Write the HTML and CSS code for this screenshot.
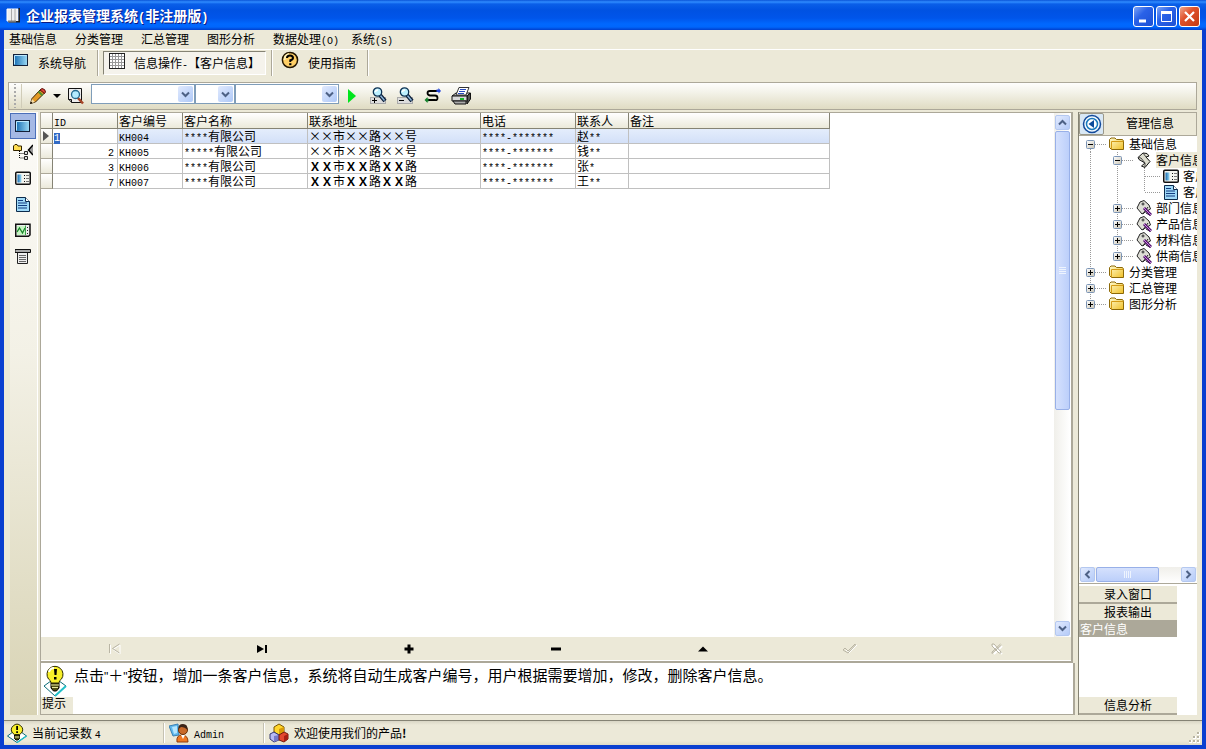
FILE: index.html
```html
<!DOCTYPE html>
<html lang="zh-CN">
<head>
<meta charset="utf-8">
<title>企业报表管理系统</title>
<link rel="stylesheet" href="styles.css">
</head>
<body>
<svg class="defs" aria-hidden="true">
  <defs>
    <linearGradient id="screenFill" x1="0" y1="0" x2="1" y2="0"><stop offset="0" stop-color="#1269b0"/><stop offset="1" stop-color="#9fdcf5"/></linearGradient>
    <linearGradient id="folderFill" x1="0" y1="0" x2="1" y2="1"><stop offset="0" stop-color="#fffbd0"/><stop offset="1" stop-color="#f0bf25"/></linearGradient>
    <linearGradient id="boxFill" x1="0" y1="0" x2="1" y2="1"><stop offset="0" stop-color="#fff"/><stop offset="1" stop-color="#c9c4b4"/></linearGradient>
    <symbol id="screen" viewBox="0 0 16 16"><rect x=".5" y="2.500" width="14" height="11" fill="url(#screenFill)" stroke="#14213a"/><path d="M1.500 12.500V3.500H13.500" fill="none" stroke="#bfeaff"/></symbol>
    <symbol id="card" viewBox="0 0 16 16"><rect x=".75" y="2.250" width="14.500" height="12" rx="1" fill="#f4f4ee" stroke="#111" stroke-width="1.500"/><rect x="2.500" y="4.500" width="4" height="8" fill="url(#screenFill)"/><path d="M9 5.500h1M9 8.500h1M9 11.500h1" stroke="#111"/><path d="M11 5.500h3M11 8.500h3M11 11.500h3" stroke="#777"/></symbol>
    <symbol id="doc" viewBox="0 0 16 16"><path d="M1.500 1.500H10.500L14.500 5.500V15.500H1.500Z" fill="#9fd9f8" stroke="#0c2b4c"/><path d="M10.500 1.500V5.500H14.500" fill="#fff" stroke="#0c2b4c"/><path d="M3 4.500h5M3 7h9M3 9.500h9M3 12h9" stroke="#123b80" stroke-width="1.200"/></symbol>
    <symbol id="folder" viewBox="0 0 16 16"><path d="M.5 11.500V3.500L2 2H6L7.500 3.500H13.500L14.500 5V13.500H2.500Z" fill="url(#folderFill)" stroke="#8c6908"/><path d="M2.500 13.500V5.500H14.500" fill="none" stroke="#d49b15"/></symbol>
    <symbol id="scroll" viewBox="0 0 16 16"><path d="M7 1L11 1.500L13 4L10 5L14 9.500L9 15.500L5.500 14L9 11L3 7.500L2 5.500Z" fill="#ddddcf" stroke="#111"/><path d="M7 1L10 5M2 5.500L5 6L9 11L9 15" fill="none" stroke="#444"/></symbol>
    <symbol id="tag" viewBox="0 0 16 16"><path d="M1 8L4 2L8 .5L13 5L14.500 9L6 14Z" fill="#deded6" stroke="#222"/><circle cx="7" cy="4" r="1" fill="#fff" stroke="#222"/><path d="M7 14L12 7M10 13L14.500 15.500" stroke="#222"/><path d="M8 8L15 15" stroke="#54156e" stroke-width="3"/><path d="M8 8L15 15" stroke="#ca85df"/></symbol>
    <symbol id="plus" viewBox="0 0 9 9"><rect x=".5" y=".5" width="8" height="8" rx="1" fill="url(#boxFill)" stroke="#7b94b5"/><path d="M2 4.500h5M4.500 2v5" stroke="#000"/></symbol>
    <symbol id="minus" viewBox="0 0 9 9"><rect x=".5" y=".5" width="8" height="8" rx="1" fill="url(#boxFill)" stroke="#7b94b5"/><path d="M2 4.500h5" stroke="#000"/></symbol>
    <symbol id="line" viewBox="0 0 27 16"><path d="M11.500 0V16" class="dots"/></symbol>
    <symbol id="tee" viewBox="0 0 27 16"><path d="M11.500 0V16M12 8.500H27" class="dots"/></symbol>
    <symbol id="elbow" viewBox="0 0 27 16"><path d="M11.500 0V8M12 8.500H27" class="dots"/></symbol>
    <symbol id="teeplus" viewBox="0 0 27 16"><use href="#tee" width="27" height="16"/><use href="#plus" x="7" y="4" width="9" height="9"/></symbol>
    <symbol id="teeminus" viewBox="0 0 27 16"><use href="#tee" width="27" height="16"/><use href="#minus" x="7" y="4" width="9" height="9"/></symbol>
    <symbol id="firstminus" viewBox="0 0 27 16"><path d="M11.500 9V16M12 8.500H27" class="dots"/><use href="#minus" x="7" y="4" width="9" height="9"/></symbol>
    <symbol id="endplus" viewBox="0 0 27 16"><use href="#elbow" width="27" height="16"/><use href="#plus" x="7" y="4" width="9" height="9"/></symbol>
    <symbol id="down" viewBox="0 0 9 7"><path d="M1 1.500L4.500 5L8 1.500" fill="none" stroke="#4d6185" stroke-width="2"/></symbol>
    <symbol id="lens" viewBox="0 0 17 17"><path d="M10 8L15 14" stroke="#071a35" stroke-width="4"/><path d="M10 8L14.500 13.500" stroke="#8bb4d8" stroke-width="1.500"/><circle cx="7.500" cy="5" r="4.200" fill="#bdf0ff" stroke="#0d3153" stroke-width="1.300"/><path d="M5.500 5Q5.500 3 8 3" fill="none" stroke="#fff" stroke-width="1.500"/></symbol>
    <symbol id="bulb" viewBox="0 0 24 32"><path d="M1 21L12 13L23 21L12 31Z" fill="#fff" stroke="#0b6b78"/><path d="M12 31L23 21" stroke="#21c0c9" stroke-width="2"/><path d="M8 18H16V23L13.500 26H10.500L8 23Z" fill="#504f12" stroke="#000"/><path d="M8 20H16M9 22.500H15" stroke="#e7e7a0"/><path d="M8 18Q8 15.500 5.500 14A8 8 0 1 1 18.500 14Q16 15.500 16 18Z" fill="#f8f02a" stroke="#2c2a00"/><path d="M6 7Q7 3 11 3" fill="none" stroke="#fff" stroke-width="2"/><path d="M11 4h3l-.5 6h-2zM11 12h2.500v2.500H11z" fill="#000"/></symbol>
    <symbol id="smallbulb" viewBox="0 0 20 20"><path d="M.5 13L10 6L19.500 13L10 19.500Z" fill="#fff" stroke="#0b6b78"/><path d="M10 19.500L19.500 13" stroke="#21c0c9" stroke-width="1.500"/><path d="M7.500 12H12.500V15.500L11 17H9L7.500 15.500Z" fill="#504f12" stroke="#000"/><path d="M7.500 14H12.500" stroke="#e7e7a0"/><path d="M7.500 11.500L5.500 10A5.500 5.500 0 1 1 14.500 10L12.500 11.500Z" fill="#f8f02a" stroke="#2c2a00"/><path d="M9.200 3h1.800v4H9.200zM9.200 8.200h1.800v1.800H9.200z" fill="#000"/></symbol>
  </defs>
</svg>
<div class="window">
  <header class="titlebar">
    <svg class="i16" viewBox="0 0 16 16"><path d="M1 1H12V13H1Z" fill="#eee" stroke="#fff"/><path d="M5.500 1V13M9 1V13" stroke="#aaa"/><path d="M12.500 0H14V14.500H3V13H12.500Z" fill="#222"/><path d="M2 13.500H10" stroke="#777" stroke-width="2"/></svg>
    <h1>企业报表管理系统<span>(</span>非注册版<span>)</span></h1>
    <div class="winbuttons">
      <button aria-label="最小化"><svg viewBox="0 0 19 19"><path d="M5 14h7" stroke="#fff" stroke-width="3"/></svg></button>
      <button aria-label="最大化"><svg viewBox="0 0 19 19"><path d="M4.500 5V14.500H14.500V5" fill="none" stroke="#fff"/><path d="M4 5.500H15" stroke="#fff" stroke-width="3"/></svg></button>
      <button class="close" aria-label="关闭"><svg viewBox="0 0 19 19"><path d="M5 5L14 14M14 5L5 14" stroke="#fff" stroke-width="2.200"/></svg></button>
    </div>
  </header>
  <nav class="menu">
    <button>基础信息</button><button>分类管理</button><button>汇总管理</button><button>图形分析</button><button class="tight">数据处理<span class="m">(O)</span></button><button>系统<span class="m">(S)</span></button>
  </nav>
  <div class="tabs">
    <button class="tab"><svg class="i16"><use href="#screen"/></svg>系统导航</button>
    <i class="sep"></i>
    <button class="tab active"><svg class="i16" viewBox="0 0 16 16"><rect x=".5" y=".5" width="15" height="15" fill="#fff" stroke="#222"/><path d="M3.500 1V15M6.500 1V15M9.500 1V15M12.500 1V15M1 3.500H15M1 6.500H15M1 9.500H15M1 12.500H15" stroke="#999"/></svg><span>信息操作<span class="m">-</span>【客户信息】</span></button>
    <i class="sep"></i>
    <button class="tab"><svg class="i18" viewBox="0 0 18 18"><circle cx="9" cy="9" r="7.600" fill="#ffcf65" stroke="#221500" stroke-width="1.500"/><path d="M3.500 9Q3.500 4 8 3" stroke="#fff0b5" stroke-width="2" fill="none"/><path d="M6 7Q6 4.500 9 4.500T12 7Q12 8.500 9.300 9.300V11" fill="none" stroke="#000" stroke-width="2"/><path d="M8.200 12.200h2.200v2H8.200z"/></svg>使用指南</button>
    <i class="sep"></i>
  </div>
  <div class="toolbar">
    <i class="grip"></i>
    <button class="tool" aria-label="编辑"><svg class="i18" viewBox="0 0 18 18"><path d="M1.500 16.500L3 11.500L11.500 2.500L15.500 6L6.500 15Z" fill="#e39a25" stroke="#3a2104"/><path d="M11 3L13 1.500Q16.500 2 16.500 5L15.500 6.500Z" fill="#df4236" stroke="#5b130d"/><path d="M9.500 4.500L13.500 8.500" stroke="#4f8f2d" stroke-width="2"/><path d="M3 12L6 15L1.500 16.500Z" fill="#f7dda5"/><path d="M1 17L3.500 16L2 14.500Z"/></svg></button>
    <button class="arrow" aria-label="编辑选项"><svg viewBox="0 0 8 4"><path d="M0 0H8L4 4Z"/></svg></button>
    <button class="tool" aria-label="预览"><svg class="i18" viewBox="0 0 18 18"><path d="M1.500 1.500H14.500V15.500H4.500L1.500 12.500Z" fill="#eee" stroke="#111"/><path d="M1.500 12.500H4.500V15.500" fill="#999" stroke="#111"/><path d="M10.500 10.500L16 16.500" stroke="#a64325" stroke-width="2.500"/><circle cx="8.500" cy="7.500" r="4" fill="#b4ebff" stroke="#24698e" stroke-width="1.300"/></svg></button>
    <div class="combos">
      <label class="combo"><select aria-label="字段"><option></option></select><span><svg><use href="#down"/></svg></span></label>
      <label class="combo narrow"><select aria-label="条件"><option></option></select><span><svg><use href="#down"/></svg></span></label>
      <label class="combo"><select aria-label="值"><option></option></select><span><svg><use href="#down"/></svg></span></label>
    </div>
    <div class="actions">
      <button aria-label="执行"><svg class="i18" viewBox="0 0 18 18"><path d="M5 2V16L13 9Z" fill="#00e51c"/></svg></button>
      <button aria-label="放大"><svg class="i18" viewBox="0 0 18 18"><rect x=".5" y="10.500" width="15" height="6" fill="#ddd" stroke="#aaa"/><use href="#lens" width="17" height="17"/><path d="M2 13.500h5M4.500 11v5" stroke="#000"/></svg></button>
      <button aria-label="缩小"><svg class="i18" viewBox="0 0 18 18"><rect x=".5" y="10.500" width="15" height="6" fill="#ddd" stroke="#aaa"/><use href="#lens" width="17" height="17"/><path d="M2 13.500h5" stroke="#000"/></svg></button>
      <button aria-label="转换"><svg class="i18" viewBox="0 0 18 18"><path d="M14 4H6Q3.500 4 3.500 6T6 8.500H11Q13.500 8.500 13.500 11T11 13H3" fill="none" stroke="#000" stroke-width="1.800"/><path d="M12.500 2.500h2V1L17 4L14.500 6.500V5h-2z" fill="#2445d8"/><path d="M4.500 11.500h-1V10L.5 13L3.500 16v-1.500h1z" fill="#15802b"/></svg></button>
      <button aria-label="打印"><svg class="i20" viewBox="0 0 20 20"><path d="M1 10L5 7H19L16 10Z" fill="#ddd" stroke="#111"/><path d="M16 10L19.500 7V13L16 18Z" fill="#555" stroke="#111"/><path d="M1 10H16V15H1Z" fill="#d8d8d8" stroke="#111"/><path d="M2 15H15V18H4Z" fill="#aaa" stroke="#111"/><path d="M5 9L8 1.500H18L15 9Z" fill="#fff" stroke="#333"/><path d="M9 3.500h6M8 5.500h6M7 7.500h6" stroke="#2649bd"/><path d="M9 13h4" stroke="#18b42b" stroke-width="2"/></svg></button>
    </div>
  </div>
  <main class="main">
    <aside class="rail">
      <button class="on" aria-label="系统导航"><svg class="i16"><use href="#screen"/></svg></button>
      <button aria-label="结构"><svg class="tall" viewBox="0 0 20 16"><path d="M.5 6.500V2L2 .5H4L5 2H8.500V6.500Z" fill="#ffdd53" stroke="#332500"/><path d="M6.500 7V14H11M6.500 9.500H11" fill="none" stroke="#000" stroke-dasharray="1 1"/><path d="M11.500 7.500H14.500V10.500H11.500ZM11.500 12.500H14.500V15.500H11.500Z" fill="#ddd" stroke="#222"/><path d="M20 1L15.500 6L20 11" fill="#999" stroke="#000" stroke-width="1.500"/></svg></button>
      <button aria-label="卡片"><svg class="i16"><use href="#card"/></svg></button>
      <button aria-label="文档"><svg class="i16"><use href="#doc"/></svg></button>
      <button aria-label="图表"><svg class="i16" viewBox="0 0 16 16"><path d="M.75 2.250H15V13L13.500 14.250H.75Z" fill="#eee" stroke="#111" stroke-width="1.500"/><path d="M2 4H10V13H2Z" fill="#c6f5c3"/><path d="M2 10L4.500 6L7.500 11L10 6" fill="none" stroke="#178529" stroke-width="1.300"/><path d="M10.500 3.500V13" stroke="#3ca34c"/><path d="M12 5.500h1M12 8.500h1M12 11.500h1" stroke="#222"/></svg></button>
      <button aria-label="报表"><svg class="i16" viewBox="0 0 16 16"><path d="M2.500 4H12.500V15.500H2.500Z" fill="#eee" stroke="#222"/><path d="M0 1.500H15.500V4.500H0Z" fill="#aaa" stroke="#111"/><path d="M4 7.500h7M4 9.500h7M4 11.500h7M4 13.500h7" stroke="#666"/></svg></button>
    </aside>
    <section class="center">
      <div class="gridpanel">
        <div class="gridarea">
          <div class="tablewrap">
            <table>
              <colgroup><col class="c0"><col class="c1"><col class="c2"><col class="c3"><col class="c4"><col class="c5"><col class="c6"><col class="c7"></colgroup>
              <thead><tr><th></th><th><span class="m">ID</span></th><th>客户编号</th><th>客户名称</th><th>联系地址</th><th>电话</th><th>联系人</th><th>备注</th></tr></thead>
              <tbody>
                <tr class="sel"><th><svg viewBox="0 0 6 10"><path d="M0 0L6 5L0 10Z" fill="#555"/></svg></th><td class="edit"><span class="m">1</span></td><td><span class="m">KH004</span></td><td><span class="m">****</span>有限公司</td><td>××市××路××号</td><td><span class="m">****-*******</span></td><td>赵<span class="m">**</span></td><td></td></tr>
                <tr><th></th><td class="num"><span class="m">2</span></td><td><span class="m">KH005</span></td><td><span class="m">*****</span>有限公司</td><td>××市××路××号</td><td><span class="m">****-*******</span></td><td>钱<span class="m">**</span></td><td></td></tr>
                <tr><th></th><td class="num"><span class="m">3</span></td><td><span class="m">KH006</span></td><td><span class="m">****</span>有限公司</td><td><b>ＸＸ</b>市<b>ＸＸ</b>路<b>ＸＸ</b>路</td><td><span class="m">****-*******</span></td><td>张<span class="m">*</span></td><td></td></tr>
                <tr><th></th><td class="num"><span class="m">7</span></td><td><span class="m">KH007</span></td><td><span class="m">****</span>有限公司</td><td><b>ＸＸ</b>市<b>ＸＸ</b>路<b>ＸＸ</b>路</td><td><span class="m">****-*******</span></td><td>王<span class="m">**</span></td><td></td></tr>
              </tbody>
            </table>
          </div>
          <div class="vscroll">
            <button aria-label="向上"><svg class="flip"><use href="#down"/></svg></button>
            <div class="vtrack"><div class="vthumb"><svg viewBox="0 0 8 8"><path d="M0 .5h7M0 2.500h7M0 4.500h7M0 6.500h7" stroke="#eef4fe"/></svg></div></div>
            <button aria-label="向下"><svg><use href="#down"/></svg></button>
          </div>
        </div>
        <div class="navigator">
          <button disabled aria-label="首条"><svg viewBox="0 0 12 12"><path d="M1.500 2V11M11 2L4 6.500L11 11Z" fill="none" stroke="#fff"/><path d="M.5 1V10M10.500 1L3.500 5.500L10.500 10" fill="none" stroke="#b9b5a4"/></svg></button>
          <button aria-label="末条"><svg viewBox="0 0 12 12"><path d="M1 2L8 6L1 10ZM9 2H11V10H9Z"/></svg></button>
          <button aria-label="增加"><svg viewBox="0 0 12 12"><path d="M4.500 1.500h3v3h3v3h-3v3h-3v-3h-3v-3h3z"/></svg></button>
          <button aria-label="删除"><svg viewBox="0 0 12 12"><path d="M1 4.500h10v3H1z"/></svg></button>
          <button aria-label="编辑"><svg viewBox="0 0 12 12"><path d="M6 3.500L11 8.500H1Z"/></svg></button>
          <button disabled aria-label="保存"><svg viewBox="0 0 14 12"><path d="M1 8L3 6L5 9L13 1" transform="translate(1 1)" fill="none" stroke="#fff"/><path d="M0 7L2 5L5 8L12 1L12.500 2L5 10Z" fill="none" stroke="#b9b5a4"/></svg></button>
          <button disabled aria-label="取消"><svg viewBox="0 0 12 12"><path d="M2 2L11 11M11 3L3 11" stroke="#fff" stroke-width="2"/><path d="M1 1H3L10 9V10L8 10L1 3ZM9.500 1L1 9V10.500L10.500 2" fill="none" stroke="#b9b5a4"/></svg></button>
        </div>
      </div>
      <div class="tip">
        <div class="tiplabel"><svg><use href="#bulb"/></svg><span>提示</span></div>
        <p>点击<span>"</span>＋<span>"</span>按钮，增加一条客户信息，系统将自动生成客户编号，用户根据需要增加，修改，删除客户信息。</p>
      </div>
    </section>
    <aside class="side">
      <div class="sidehead"><button aria-label="返回"><svg viewBox="0 0 20 20"><circle cx="10" cy="10" r="8.500" fill="#f4fbff" stroke="#12499a" stroke-width="1.500"/><circle cx="10" cy="10" r="5.500" fill="#fff" stroke="#1979bd" stroke-width="1.500"/><path d="M12 6V14L6.500 10Z" fill="#0d4b9b"/></svg></button><h2>管理信息</h2></div>
      <ul class="tree">
        <li><svg class="g"><use href="#firstminus"/></svg><svg class="i16"><use href="#folder"/></svg><span>基础信息</span></li>
        <li><svg class="g"><use href="#line"/></svg><svg class="g"><use href="#teeminus"/></svg><svg class="i16"><use href="#scroll"/></svg><span class="cur">客户信息</span></li>
        <li><svg class="g"><use href="#line"/></svg><svg class="g"><use href="#line"/></svg><svg class="g"><use href="#tee"/></svg><svg class="i16"><use href="#card"/></svg><span>客户信息</span></li>
        <li><svg class="g"><use href="#line"/></svg><svg class="g"><use href="#line"/></svg><svg class="g"><use href="#elbow"/></svg><svg class="i16"><use href="#doc"/></svg><span>客户信息</span></li>
        <li><svg class="g"><use href="#line"/></svg><svg class="g"><use href="#teeplus"/></svg><svg class="i16"><use href="#tag"/></svg><span>部门信息</span></li>
        <li><svg class="g"><use href="#line"/></svg><svg class="g"><use href="#teeplus"/></svg><svg class="i16"><use href="#tag"/></svg><span>产品信息</span></li>
        <li><svg class="g"><use href="#line"/></svg><svg class="g"><use href="#teeplus"/></svg><svg class="i16"><use href="#tag"/></svg><span>材料信息</span></li>
        <li><svg class="g"><use href="#line"/></svg><svg class="g"><use href="#endplus"/></svg><svg class="i16"><use href="#tag"/></svg><span>供商信息</span></li>
        <li><svg class="g"><use href="#teeplus"/></svg><svg class="i16"><use href="#folder"/></svg><span>分类管理</span></li>
        <li><svg class="g"><use href="#teeplus"/></svg><svg class="i16"><use href="#folder"/></svg><span>汇总管理</span></li>
        <li><svg class="g"><use href="#endplus"/></svg><svg class="i16"><use href="#folder"/></svg><span>图形分析</span></li>
      </ul>
      <div class="hscroll">
        <button aria-label="向左"><svg class="left"><use href="#down"/></svg></button>
        <div class="htrack"><div class="hthumb"><svg viewBox="0 0 8 8"><path d="M.5 0v7M2.500 0v7M4.500 0v7M6.500 0v7" stroke="#eef4fe"/></svg></div></div>
        <button aria-label="向右"><svg class="right"><use href="#down"/></svg></button>
      </div>
      <div class="outlook">
        <button>录入窗口</button>
        <button>报表输出</button>
        <div class="chosen">客户信息</div>
        <div class="blank"></div>
        <button>信息分析</button>
      </div>
    </aside>
  </main>
  <footer class="status">
    <div class="cell"><svg class="i20"><use href="#smallbulb"/></svg><span>当前记录数 <span class="m">4</span></span></div>
    <div class="cell user"><svg class="i20" viewBox="0 0 20 20"><path d="M0 3L9 1L10 12L4 13Z" fill="#5fb8ed" stroke="#3980b4"/><path d="M3 4L8 3V10L5 11Z" fill="#b5e6ff"/><path d="M8 19Q7 12 13 12T19 19Z" fill="#ef7822" stroke="#8d3b0c"/><path d="M12 12L14 16L16 12Z" fill="#fff"/><circle cx="14" cy="7" r="4.500" fill="#c86a2a" stroke="#693008"/><path d="M9.500 6Q9 1 14 1T18.500 7Q16 4 12 4Z" fill="#3b2417"/></svg><span><span class="m">Admin</span></span></div>
    <div class="cell last"><svg class="i20" viewBox="0 0 20 20"><path d="M5 4L10 1L15 4V9L10 12L5 9Z" fill="#ffd52a" stroke="#7a5700"/><path d="M10 6V12L15 9V4Z" fill="#d79a07"/><path d="M1 11L5 9L10 12V17L5 19L1 16Z" fill="#b8baf4" stroke="#34366f"/><path d="M5 13V19L10 17V12Z" fill="#7679c8"/><path d="M10 12L15 9L19 11V16L15 19L10 17Z" fill="#e34730" stroke="#72180d"/><path d="M15 13V19L19 16V11Z" fill="#a71e15"/></svg><span>欢迎使用我们的产品<b>!</b></span></div>
    <svg class="resize" viewBox="0 0 12 12"><path d="M8 0h3v3H8zM4 4h3v3H4zM8 4h3v3H8zM0 8h3v3H0zM4 8h3v3H4zM8 8h3v3H8z" fill="#fff"/><path d="M8 0h2v2H8zM4 4h2v2H4zM8 4h2v2H8zM0 8h2v2H0zM4 8h2v2H4zM8 8h2v2H8z" fill="#b8b4a2"/></svg>
  </footer>
</div>
</body>
</html>
```

FILE: styles.css
```css
* { box-sizing: border-box; }
body {
  margin: 0;
  font-family: "Noto Sans CJK SC", "Liberation Sans", sans-serif;
  font-size: 12px;
  line-height: 14px;
  color: #000;
  background: #0b45ae;
}
svg { display: block; flex: none; }
button { font: inherit; color: inherit; padding: 0; border: 0; background: none; display: flex; align-items: center; justify-content: center; white-space: nowrap; }
.defs { position: absolute; width: 0; height: 0; }
.dots { stroke: #999; stroke-dasharray: 1 1; fill: none; }
.m { font-family: "Liberation Mono", monospace; font-size: 10px; line-height: 0; }
.i16 { width: 16px; height: 16px; }
.i18 { width: 18px; height: 18px; }
.i20 { width: 20px; height: 20px; }

.window { height: 100vh; display: flex; flex-direction: column; background: #0a3fd0; }
.titlebar {
  flex: none;
  height: 30px;
  display: flex;
  align-items: center;
  gap: 4px;
  padding: 2px 6px 0;
  color: #fff;
  background: linear-gradient(#0a55d8 0, #2f8cff 2px, #0a5fe8 4px, #0052e2 10px, #0055ea 18px, #0068ff 24px, #0066fc 27px, #003fcd 30px);
}
.titlebar h1 { flex: 1; margin: 0; font-size: 14px; line-height: 20px; font-weight: bold; text-shadow: 1px 1px #0a1883; }
.titlebar h1 span { font-family: "Liberation Mono", monospace; font-size: 12px; }
.winbuttons { display: flex; gap: 2px; }
.winbuttons button { width: 21px; height: 21px; border: 1px solid #fff; border-radius: 3px; background: linear-gradient(135deg, #7da4f5, #2a62e8 40%, #1c50d4); }
.winbuttons .close { background: linear-gradient(135deg, #f0a68c, #e0522c 40%, #c33a12); }
.winbuttons svg { width: 19px; height: 19px; }

.menu, .tabs, .toolbar, .main, .status { margin: 0 4px; }
.menu { flex: none; height: 20px; display: flex; align-items: center; gap: 18px; padding: 0 5px 2px; background: #ece9d8; border-bottom: 1px solid #fff; }
.menu button { align-items: baseline; }
.menu .tight { margin-right: -6px; }
.tabs { flex: none; height: 32px; display: flex; align-items: flex-start; padding: 0 4px 0 0; background: #ece9d8; }
.tab { height: 26px; padding: 0 11px 0 8px; gap: 9px; }
.tab:first-child { padding-left: 9px; }
.tab .i16, .tab .i18 { margin-bottom: 6px; }
.tab.active { margin: 1px 5px 0 4px; height: 24px; width: 163px; padding: 0 6px 0 5px; justify-content: flex-start; border: 1px solid #fff; border-top-color: #858374; border-left-color: #858374; background: #f5f3ec; }
.tab.active .i16 { margin-bottom: 4px; }
.sep { width: 2px; height: 26px; border-left: 1px solid #aca899; border-right: 1px solid #fff; }

.toolbar { flex: none; height: 28px; display: flex; align-items: center; border-left: 4px solid #ece9d8; border-right: 5px solid #ece9d8; background: linear-gradient(#fff, #f4f3ea 35%, #dedac0); box-shadow: inset 0 1px #aca899, inset 0 -1px #aca899, inset 1px 0 #aca899, inset -1px 0 #aca899; }
.grip { width: 14px; height: 24px; margin-right: 6px; border-right: 1px solid #d0ccb8; background: radial-gradient(circle at 50% 50%, #aaa 1px, transparent 1px) center / 4px 4px repeat-y; }
.tool { width: 20px; }
.arrow { width: 18px; height: 20px; }
.arrow svg { width: 8px; height: 4px; }
.combos { display: flex; align-self: flex-start; margin: 2px 0 0 5px; }
.combo { position: relative; width: 104px; height: 20px; }
.combo.narrow { width: 40px; }
.combo select { display: block; appearance: none; width: 100%; height: 100%; border: 1px solid #7f9db9; border-radius: 0; background: #fff; }
.combo span { position: absolute; right: 2px; top: 2px; width: 15px; height: 16px; border-radius: 2px; background: linear-gradient(135deg, #e1eafe, #aec8f7); display: flex; align-items: center; justify-content: center; pointer-events: none; }
.combo svg, .vscroll button svg, .hscroll button svg { width: 9px; height: 7px; }
.actions { display: flex; gap: 9px; margin-left: 4px; }

.main { flex: 1; min-height: 0; display: flex; padding: 2px 5px 5px 6px; background: #ece9d8; }
.rail { width: 28px; padding-top: 1px; margin-right: 2px; border-right: 1px solid #fff; background: linear-gradient(#fcfbf8, #f3f1e6 40%, #d8d3b4); }
.rail button { width: 26px; height: 26px; }
.tall { width: 20px; height: 16px; }
.rail .on { border: 1px solid #4b6fb8; background: #a5b9e5; }
.center { flex: 1; min-width: 0; display: flex; flex-direction: column; }
.gridpanel { flex: 1; min-height: 0; display: flex; flex-direction: column; margin-right: 2px; border: 1px solid #aca899; border-right-width: 2px; border-bottom-width: 2px; background: #fff; }
.gridarea { flex: 1; min-height: 0; display: flex; padding-right: 1px; }
.tablewrap { flex: 1; min-width: 0; overflow: hidden; }
table { width: 789px; table-layout: fixed; border-collapse: separate; border-spacing: 0; }
.c0 { width: 12px; }
.c1, .c2 { width: 65px; }
.c3 { width: 125px; }
.c4 { width: 173px; }
.c5 { width: 95px; }
.c6 { width: 53px; }
.c7 { width: 201px; }
th, td { height: 15px; padding: 0 1px; line-height: 14px; text-align: left; font-weight: normal; white-space: nowrap; border-right: 1px solid #c0c0c0; border-bottom: 1px solid #c0c0c0; }
thead th { height: 16px; border-color: #858374; background: linear-gradient(#fff, #ebe9da); }
tbody th { padding-left: 2px; border-right-color: #858374; border-bottom-color: #aca899; background: linear-gradient(#fff, #ebe9da); }
tbody th svg { width: 6px; height: 10px; }
.sel td { background: linear-gradient(#e4edfc, #d3e0f8); }
.sel .edit { background: #fff; }
.edit span { color: #fff; background: #316ac5; }
.num { text-align: right; padding-right: 3px; }

.vscroll { width: 16px; display: flex; flex-direction: column; padding: 2px 0 1px 1px; background: linear-gradient(90deg, #f0efea, #fff); }
.vscroll button, .hscroll button { flex: none; width: 15px; height: 15px; border: 1px solid #b4c8f0; border-radius: 2px; background: linear-gradient(135deg, #e1eafe, #b5cbf8); }
.flip { transform: rotate(180deg); }
.left { transform: rotate(90deg); }
.right { transform: rotate(-90deg); }
.vtrack { flex: 1; padding-top: 1px; }
.vthumb { height: 57%; width: 15px; display: flex; align-items: center; justify-content: center; border: 1px solid #98b0e8; border-radius: 2px; background: linear-gradient(90deg, #d5e1fd, #bccffa); }
.vthumb svg, .hthumb svg { width: 8px; height: 8px; }
.navigator { flex: none; height: 24px; display: flex; background: #ece9d8; border-bottom: 1px solid #fff; }
.navigator button { flex: 1; }
.navigator svg { height: 12px; width: 14px; }

.tip { flex: none; height: 52px; display: flex; gap: 1px; border-right: 2px solid #aca899; border-bottom: 1px solid #aca899; border-left: 1px solid #aca899; background: #fff; }
.tiplabel { width: 32px; display: flex; flex-direction: column; }
.tiplabel svg { width: 24px; height: 32px; margin: 2px 0 0 2px; }
.tiplabel span { flex: 1; padding-left: 1px; line-height: 12px; background: #ece9d8; }
.tip p { margin: 2px 0 0; font-size: 15px; line-height: 20px; white-space: nowrap; overflow: hidden; }
.tip p span { font-family: "Liberation Sans", sans-serif; font-size: 12px; }

.side { width: 119px; margin-left: 3px; display: flex; flex-direction: column; border-left: 1px solid #858374; background: #fff; overflow: hidden; }
.sidehead { flex: none; height: 24px; display: flex; background: #ece9d8; border: 1px solid #aca899; border-left: 0; }
.sidehead button { width: 25px; border: 1px solid #9a9788; border-radius: 2px; background: #d9e8f5; }
.sidehead svg { width: 20px; height: 20px; }
.sidehead h2 { flex: 1; margin: 0; font-size: 12px; font-weight: normal; line-height: 20px; text-align: center; }
.tree { flex: 1; min-height: 0; margin: 0; padding: 0; list-style: none; overflow: hidden; }
.tree li { display: flex; height: 16px; }
.tree .g { width: 27px; height: 16px; }
.tree .i16 { margin: 0 4px 0 3px; }
.tree span { flex: none; line-height: 16px; }
.tree .cur { background: #ece9d8; }
.hscroll { flex: none; height: 17px; display: flex; padding: 0 1px; border-bottom: 1px solid #aca899; background: linear-gradient(#f0efea, #fff); }
.htrack { flex: 1; padding: 0 1px; }
.hthumb { width: 75%; height: 15px; display: flex; align-items: center; justify-content: center; border: 1px solid #98b0e8; border-radius: 2px; background: linear-gradient(#d5e1fd, #bccffa); }
.outlook { flex: none; height: 131px; width: 98px; padding-top: 2px; display: flex; flex-direction: column; }
.outlook button { flex: none; height: 18px; background: #ece9d8; border-bottom: 2px solid #aca899; }
.chosen { height: 15px; padding-left: 1px; color: #fff; background: #aca899; }
.blank { flex: 1; }

.status { flex: none; height: 25px; margin-bottom: 4px; display: flex; align-items: center; padding-left: 3px; border-top: 1px solid #858374; background: linear-gradient(#d9d6c5, #ece9d8 4px, #ece9d8 20px, #dedbc8); }
.cell { width: 157px; height: 20px; display: flex; align-items: center; gap: 5px; border-right: 1px solid #c5c2b2; box-shadow: 1px 0 #fff; }
.user { width: 100px; padding-left: 5px; }
.last { flex: 1; padding-left: 5px; border: 0; box-shadow: none; }
.resize { width: 12px; height: 12px; align-self: flex-end; margin: 0 1px 1px 0; }
```
